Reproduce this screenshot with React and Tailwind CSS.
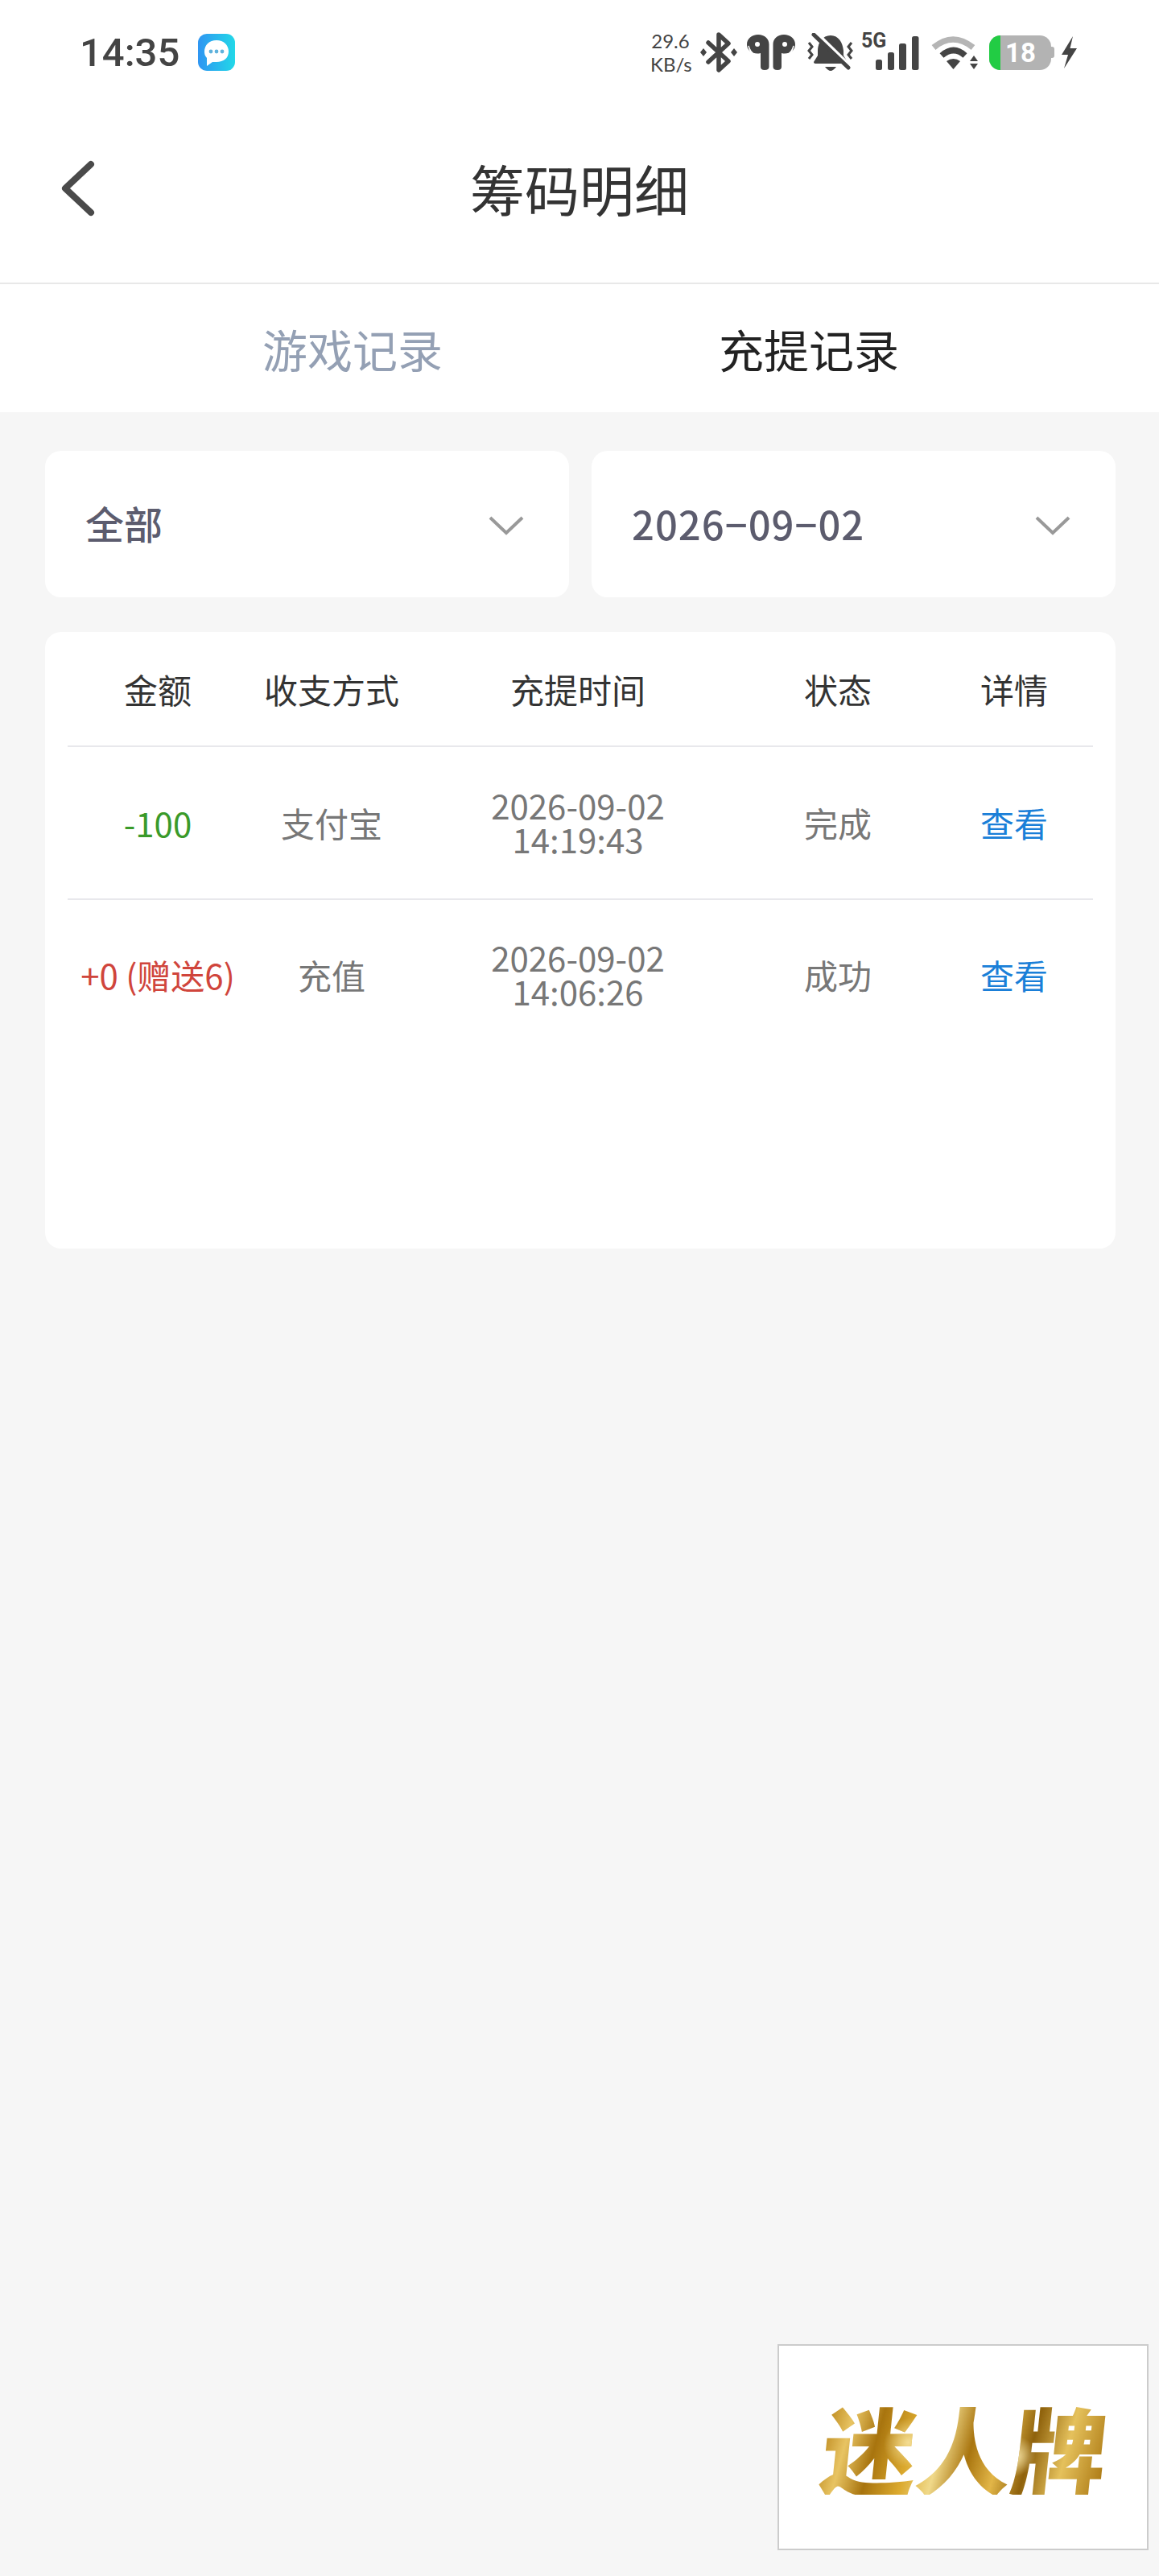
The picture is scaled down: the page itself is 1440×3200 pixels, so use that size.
import React from "react";

function Bluetooth() {
  return (
    <svg width="46" height="50" viewBox="0 0 46 50" className="ml-[12px] shrink-0">
      <path d="M10 13 L35 36 L23 47 V3 L35 14 L10 37" fill="none" stroke="#444" strokeWidth="5.5" strokeLinejoin="round" strokeLinecap="round" />
      <path d="M4 20 L8 25 L4 30 L0 25Z M42 20 L46 25 L42 30 L38 25Z" fill="#444" />
    </svg>
  );
}

function Buds() {
  return (
    <svg width="60" height="44" viewBox="0 0 60 44" className="ml-[12px] shrink-0">
      <path d="M14 0 C22 0 27.5 5 27.5 12 V40 Q27.5 44 22 44 Q17 44 17 40 V23 C9 25 0 21 0 12 C0 5 6 0 14 0Z" fill="#444" />
      <path d="M46 0 C38 0 32.5 5 32.5 12 V40 Q32.5 44 38 44 Q43 44 43 40 V23 C51 25 60 21 60 12 C60 5 54 0 46 0Z" fill="#444" />
      <circle cx="13" cy="12" r="3" fill="#fff" />
      <circle cx="47" cy="12" r="3" fill="#fff" />
      <path d="M2 14 Q4 22 10 25 Q4 23 2 14Z M58 14 Q56 22 50 25 Q56 23 58 14Z" fill="#fff" stroke="#fff" strokeWidth="1.5" />
    </svg>
  );
}

function Bell() {
  return (
    <svg width="60" height="48" viewBox="0 0 60 48" className="ml-[14px] shrink-0">
      <path d="M30 3 C40 3 45 12 46 22 V28 L51 36 Q51 38 48 38 H12 Q9 38 9 36 L14 28 V22 C14 12 20 3 30 3Z" fill="#444" />
      <path d="M23 42 H37 Q33 47 30 47 Q27 47 23 42Z" fill="#444" />
      <path d="M12 0 L57 44" stroke="#fff" strokeWidth="5" />
      <path d="M9 2 L52 43" stroke="#444" strokeWidth="5" strokeLinecap="round" />
      <path d="M3 12 L7 17 L3 22 L7 27 L3 32 M56 12 L52 17 L56 22 L52 27 L56 32" fill="none" stroke="#444" strokeWidth="3" />
    </svg>
  );
}

function Signal() {
  return (
    <svg width="72" height="56" viewBox="0 0 72 56" className="ml-[8px] shrink-0">
      <text x="0" y="22" fontFamily="Roboto, sans-serif" fontWeight="700" fontSize="25" fill="#444">5G</text>
      <rect x="18" y="37" width="8" height="13" rx="2.5" fill="#444" />
      <rect x="33" y="28" width="8" height="22" rx="2.5" fill="#444" />
      <rect x="47" y="17" width="9" height="33" rx="2.5" fill="#444" />
      <rect x="63" y="8" width="8.5" height="42" rx="2.5" fill="#444" />
    </svg>
  );
}

function Wifi() {
  return (
    <svg width="58" height="41" viewBox="0 0 58 41" className="ml-[15px] shrink-0">
      <path d="M3 14 Q27 -6 52 14" fill="none" stroke="#b5b5b5" strokeWidth="7.5" />
      <path d="M13 24 Q28 11 42 24" fill="none" stroke="#444" strokeWidth="7.5" />
      <path d="M19 31 Q27.5 25 36 31 L27.5 41Z" fill="#444" />
      <path d="M48 31 L53 24 L58 31Z M48 34 H58 L53 41Z" fill="#444" />
    </svg>
  );
}

function Battery() {
  return (
    <div className="ml-[14px] flex items-center shrink-0">
      <div className="w-[77px] h-[43px] rounded-[14px] bg-[#b3b3b3] overflow-hidden flex">
        <div className="w-[14px] bg-[#22cc44]" />
        <div className="flex-1 pl-[6px] text-white font-['Roboto',sans-serif] font-bold text-[33px] leading-[43px]">18</div>
      </div>
      <div className="w-[4px] h-[14px] rounded-r-[3px] bg-[#b3b3b3]" />
    </div>
  );
}

function Bolt() {
  return (
    <svg width="19" height="40" viewBox="0 0 19 40" className="ml-[9px] shrink-0">
      <path d="M14 0 L0 23 L8 23 L3 40 L19 15 L10.5 15 Z" fill="#444" />
    </svg>
  );
}

function Chevron() {
  return (
    <svg width="44" height="26" viewBox="0 0 44 26" className="shrink-0 mt-[3px]">
      <path d="M2 3 L22 22 L42 3" fill="none" stroke="#999" strokeWidth="4" />
    </svg>
  );
}

function Filter({ label, extra }) {
  return (
    <div className="h-[182px] bg-white rounded-[20px] flex items-center justify-between pl-[50px] pr-[56px]">
      <span className={`leading-none font-medium text-[#5c5c6e] mb-[4px] ${extra}`}>{label}</span>
      <Chevron />
    </div>
  );
}

const gridCols = "grid grid-cols-[224px_208px_404px_242px_196px] items-center text-center";

function Row({ amount, amountClass, method, date, time, status }) {
  return (
    <div className={`${gridCols} h-[190px] pb-[2px] text-[42px] text-[#777] border-b-2 border-[#e8e8ec]`}>
      <div className={`${amountClass} whitespace-nowrap`}>{amount}</div>
      <div>{method}</div>
      <div className="leading-[42px]">
        <div>{date}</div>
        <div>{time}</div>
      </div>
      <div>{status}</div>
      <div className="text-[#1a7fd8]">查看</div>
    </div>
  );
}

export default function App() {
  return (
    <div className="relative w-[1440px] h-[3200px] bg-[#f6f6f6] font-['Noto_Sans_CJK_SC','Noto_Sans',sans-serif] overflow-hidden">
      <div className="bg-white h-[120px] flex items-center justify-between pl-[99px] pr-[102px] pt-[10px]">
        <div className="flex items-center">
          <span className="font-['Roboto',sans-serif] font-medium text-[49px] leading-none text-[#444]">14:35</span>
          <svg width="46" height="46" viewBox="0 0 46 46" className="ml-[23px]">
            <defs>
              <linearGradient id="msg" x1="0" y1="0" x2="1" y2="0">
                <stop offset="0" stopColor="#2f95f2" />
                <stop offset="1" stopColor="#22d8e8" />
              </linearGradient>
            </defs>
            <rect width="46" height="46" rx="11" fill="url(#msg)" />
            <path d="M23 8 C32 8 38 14 38 22 C38 30 32 35 23 35 L18 35 L11 40 L11 30 C8.5 27.5 8 25 8 22 C8 14 14 8 23 8Z" fill="#fff" />
            <circle cx="16" cy="22" r="2.4" fill="#5fb2dc" />
            <circle cx="23" cy="22" r="2.4" fill="#5fb2dc" />
            <circle cx="30" cy="22" r="2.4" fill="#5fb2dc" />
          </svg>
        </div>
        <div className="flex items-center">
          <div className="w-[50px] text-[#444] text-[24px] leading-[29px] font-['Lato',sans-serif] text-center whitespace-nowrap">
            <div>29.6</div>
            <div>KB/s</div>
          </div>
          <Bluetooth />
          <Buds />
          <Bell />
          <Signal />
          <Wifi />
          <Battery />
          <Bolt />
        </div>
      </div>

      <div className="relative bg-white h-[233px] pb-[4px] flex items-center justify-center border-b-2 border-[#e8e8e8]">
        <svg width="48" height="76" viewBox="0 0 48 76" className="absolute left-[72px] top-[76px]">
          <path d="M41 8 L9 38 L41 68" fill="none" stroke="#4a4a4a" strokeWidth="8" strokeLinecap="round" strokeLinejoin="round" />
        </svg>
        <h1 className="text-[68px] leading-none font-normal text-[#333]">筹码明细</h1>
      </div>

      <div className="bg-white h-[159px] flex items-center justify-center gap-[343px] pl-[3px]">
        <span className="text-[56px] leading-none text-[#94a0b4]">游戏记录</span>
        <span className="text-[56px] leading-none text-[#222]">充提记录</span>
      </div>

      <div className="pl-[56px] pr-[54px] pt-[48px]">
        <div className="grid grid-cols-2 gap-[28px]">
          <Filter label="全部" extra="text-[48px]" />
          <Filter label="2026−09−02" extra="text-[49px] tracking-[1px]" />
        </div>

        <div className="mt-[43px] h-[766px] bg-white rounded-[20px] px-[28px]">
          <div className={`${gridCols} h-[143px] text-[42px] text-[#333] border-b-2 border-[#e8e8ec]`}>
            <div>金额</div>
            <div>收支方式</div>
            <div>充提时间</div>
            <div>状态</div>
            <div>详情</div>
          </div>
          <Row amount="-100" amountClass="text-[#3a9a2a]" method="支付宝" date="2026-09-02" time="14:19:43" status="完成" />
          <div className={`${gridCols} h-[190px] pb-[6px] text-[42px] text-[#777]`}>
            <div className="text-[#d0453c] whitespace-nowrap">+0 (赠送6)</div>
            <div>充值</div>
            <div className="leading-[42px]">
              <div>2026-09-02</div>
              <div>14:06:26</div>
            </div>
            <div>成功</div>
            <div className="text-[#1a7fd8]">查看</div>
          </div>
        </div>
      </div>

      <div className="absolute left-[966px] top-[2912px] w-[461px] h-[256px] pl-[6px] bg-white border-2 border-[#cccccc] flex items-center justify-center">
        <span className="text-[118px] leading-none font-black -skew-x-6 whitespace-nowrap text-transparent bg-clip-text bg-[radial-gradient(circle_at_30%_45%,#f3dd94_0%,transparent_12%),radial-gradient(circle_at_68%_60%,#f5e3a6_0%,transparent_10%),linear-gradient(100deg,#b57f12_0%,#e8c463_10%,#a8740e_20%,#dba92e_32%,#f0d98a_42%,#a9750f_52%,#e2b648_62%,#8f620c_72%,#e5c15c_84%,#a8740e_100%)]">迷人牌</span>
      </div>
    </div>
  );
}
